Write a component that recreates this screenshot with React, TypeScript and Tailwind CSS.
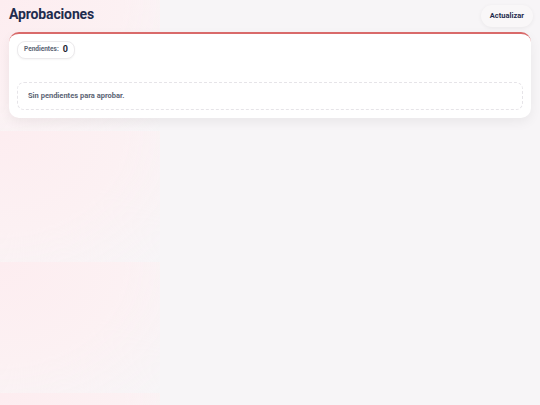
const App = () => {
  return (
    <div
      className="min-h-[405px] w-full bg-[#f7f5f7] bg-[radial-gradient(ellipse_at_0%_0%,#fdedf0_0%,#fcf1f3_55%,rgba(247,245,247,0)_100%)] bg-repeat-y [background-size:160px_131px] px-[9px] pt-[5px] font-['Roboto','Liberation_Sans',Arial,sans-serif]"
    >
      {/* HEADER */}
      <div className="flex items-start justify-between">
        <h1 className="mt-[1px] text-[14px] font-bold leading-[16px] tracking-[-0.01em] text-[#1f2c4e]">
          Aprobaciones
        </h1>
        <button className="mr-[-2px] h-[22px] rounded-[11px] bg-[#f9f7f8] px-[9px] text-[7.5px] font-bold text-[#1f2c4e] shadow-[0_1px_4px_rgba(0,0,0,0.06)]">
          Actualizar
        </button>
      </div>

      {/* CARD */}
      <div className="mt-[5px] rounded-[10px] border-t-2 border-[#d96a6a] bg-white px-[8px] pb-[8px] pt-[7px] shadow-[0_4px_12px_rgba(0,0,0,0.06)]">
        <div className="flex h-[18px] w-fit items-center gap-[4px] rounded-[8px] border border-[#eceaec] bg-white px-[6px] shadow-[0_1px_2px_rgba(0,0,0,0.04)]">
          <span className="text-[6.5px] font-bold text-[#5b6474]">Pendientes:</span>
          <span className="text-[9px] font-bold text-[#1e2533]">0</span>
        </div>

        <div className="mt-[23px] flex h-[28px] items-center rounded-[7px] border border-dashed border-[#e6e4e8] px-[10px]">
          <p className="text-[7.5px] font-bold text-[#5b6474]">Sin pendientes para aprobar.</p>
        </div>
      </div>
    </div>
  )
}

export default App
